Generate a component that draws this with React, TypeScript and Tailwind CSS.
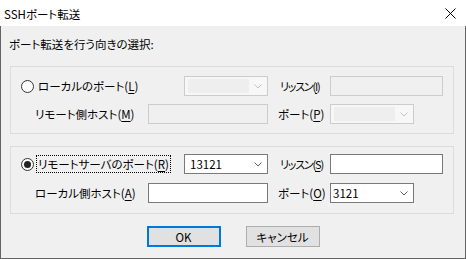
import React from 'react';

const font = "font-['Noto_Sans_CJK_JP','Noto_Sans',sans-serif] [font-feature-settings:'palt']";

const Chevron = ({ disabled }: { disabled?: boolean }) => (
  <svg width="8" height="5" viewBox="0 0 8 5" className="ml-auto mr-[5px] shrink-0">
    <path d="M0.5 0.5 L4 4 L7.5 0.5" fill="none" stroke={disabled ? '#c4c4c4' : '#606060'} strokeWidth="1" />
  </svg>
);

const Combo = ({ disabled, value, edit }: { disabled?: boolean; value?: string; edit?: boolean }) => {
  if (disabled) {
    return (
      <div className="flex h-[20px] w-[84px] shrink-0 items-center border border-[#cccccc] bg-[#f7f7f7]">
        <div className="ml-[3px] h-[14px] w-[61px] bg-[#eeeeee]" />
        <Chevron disabled />
      </div>
    );
  }
  return (
    <div className="flex h-[20px] w-[84px] shrink-0 items-center border border-[#7a7a7a] bg-white">
      <span className={edit ? 'pl-[5px]' : 'pl-[2px]'}>{value}</span>
      <Chevron />
    </div>
  );
};

const TextBox = ({ disabled, w }: { disabled?: boolean; w: 'short' | 'long' }) => (
  <div
    className={`h-[20px] shrink-0 border ${w === 'long' ? 'w-[120px]' : 'w-[113px]'} ${
      disabled ? 'border-[#cccccc] bg-[#f0f0f0]' : 'border-[#7a7a7a] bg-white'
    }`}
  />
);

const Radio = ({ checked }: { checked?: boolean }) => (
  <span className="flex h-[13px] w-[13px] shrink-0 items-center justify-center rounded-full border border-[#333333] bg-white">
    {checked && <span className="h-[7px] w-[7px] rounded-full bg-[#222222]" />}
  </span>
);

const Key = ({ k }: { k: string }) => (
  <>
    (<span className="underline underline-offset-[2px]">{k}</span>)
  </>
);

export default function App() {
  return (
    <div className={`flex h-[259px] w-[466px] flex-col overflow-hidden whitespace-nowrap bg-[#f0f0f0] text-[11.5px] leading-[16px] text-black ${font}`}>
      {/* title bar */}
      <div className="flex h-[26px] shrink-0 items-center bg-white pl-[4px] pt-[1px]">
        <span>SSHポート転送</span>
        <svg width="11" height="11" viewBox="0 0 11 11" className="ml-auto mr-[10px]">
          <path d="M0.5 0.5 L10.5 10.5 M10.5 0.5 L0.5 10.5" stroke="#000" strokeWidth="1" />
        </svg>
      </div>

      <div className="flex flex-1 flex-col border-x border-b border-[#646464]">
        <div className="ml-[8px] mt-[10px]">ポート転送を行う向きの選択:</div>

        {/* local port forwarding */}
        <div className="ml-[9px] mt-[14px] flex w-[444px] flex-col gap-[8px] border border-[#dcdcdc] pb-[9px] pl-[10px] pt-[9px]">
          <div className="flex h-[20px] items-center">
            <div className="flex w-[163px] shrink-0 items-center">
              <Radio />
              <span className="ml-[2px] border border-transparent px-[1px]">
                ローカルのポート<Key k="L" />
              </span>
            </div>
            <Combo disabled />
            <span className="ml-[12px] w-[50px] shrink-0 text-[11px] tracking-[-1.2px]">
              リッスン<Key k="I" />
            </span>
            <TextBox disabled w="short" />
          </div>
          <div className="flex h-[20px] items-center">
            <span className="w-[127px] shrink-0 pl-[14px]">
              リモート側ホスト<Key k="M" />
            </span>
            <TextBox disabled w="long" />
            <span className="ml-[10px] w-[52px] shrink-0">
              ポート<Key k="P" />
            </span>
            <Combo disabled />
          </div>
        </div>

        {/* remote port forwarding */}
        <div className="ml-[9px] mt-[12px] flex w-[444px] flex-col gap-[9px] border border-[#dcdcdc] pb-[10px] pl-[10px] pt-[7px]">
          <div className="flex h-[20px] items-center">
            <div className="flex w-[163px] shrink-0 items-center">
              <Radio checked />
              <span className="ml-[2px] border border-dotted border-black px-[1px]">
                リモートサーバのポート<Key k="R" />
              </span>
            </div>
            <Combo value="13121" edit />
            <span className="ml-[12px] w-[50px] shrink-0 text-[11px] tracking-[-1.2px]">
              リッスン<Key k="S" />
            </span>
            <TextBox w="short" />
          </div>
          <div className="flex h-[20px] items-center">
            <span className="w-[127px] shrink-0 pl-[14px]">
              ローカル側ホスト<Key k="A" />
            </span>
            <TextBox w="long" />
            <span className="ml-[10px] w-[52px] shrink-0">
              ポート<Key k="O" />
            </span>
            <Combo value="3121" />
          </div>
        </div>

        <div className="mt-[12px] flex justify-center gap-[25px]">
          <button className="flex h-[21px] w-[74px] items-center justify-center border-2 border-[#0078d7] bg-[#e1e1e1]">
            OK
          </button>
          <button className="flex h-[21px] w-[74px] items-center justify-center border border-[#adadad] bg-[#e1e1e1]">
            キャンセル
          </button>
        </div>
      </div>
    </div>
  );
}
